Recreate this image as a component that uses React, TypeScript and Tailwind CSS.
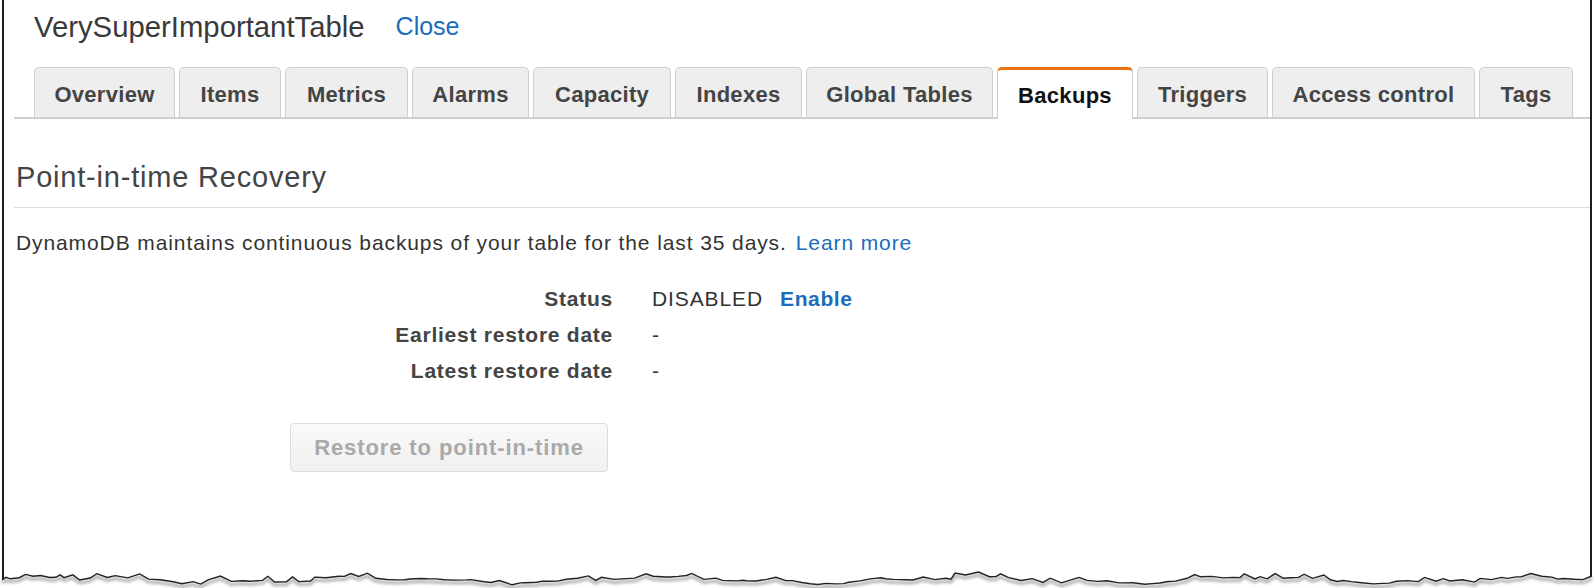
import React from 'react';

const tabs = [
  { label: 'Overview', w: 'w-[141px]' },
  { label: 'Items', w: 'w-[102px]' },
  { label: 'Metrics', w: 'w-[123px]' },
  { label: 'Alarms', w: 'w-[117px]' },
  { label: 'Capacity', w: 'w-[138px]' },
  { label: 'Indexes', w: 'w-[127px]' },
  { label: 'Global Tables', w: 'w-[187px]' },
  { label: 'Backups', w: 'w-[136px]', active: true },
  { label: 'Triggers', w: 'w-[131px]' },
  { label: 'Access control', w: 'w-[203px]' },
  { label: 'Tags', w: 'w-[94px]' },
];

// jagged "torn paper" edge at the bottom of the screenshot
const tear = (() => {
  let seed = 11;
  const rnd = () => {
    seed = (seed * 16807) % 2147483647;
    return seed / 2147483647;
  };
  const pts: [number, number][] = [[2, 14]];
  let x = 6;
  while (x < 1590) {
    const wave = Math.sin(x / 47) * 2.5 + Math.sin(x / 17) * 1.5;
    const spike = rnd() < 0.3 ? rnd() * 5 : 0;
    pts.push([x, 15 - wave - spike - rnd() * 2]);
    x += 4 + rnd() * 9;
  }
  pts.push([1592, 10]);
  return pts;
})();

const line = tear.map(([x, y], i) => `${i ? 'L' : 'M'}${x.toFixed(1)} ${y.toFixed(1)}`).join(' ');

const rows = [
  { label: 'Status', value: 'DISABLED', link: 'Enable' },
  { label: 'Earliest restore date', value: '-' },
  { label: 'Latest restore date', value: '-' },
];

export default function App() {
  return (
    <div className="relative w-[1596px] h-[588px] overflow-hidden bg-white font-['Liberation_Sans',Arial,sans-serif] text-[#333]">
      <div className="ml-[2px] w-[1590px] h-[588px] border-x-2 border-[#1c1c1c]">
        {/* header */}
        <div className="flex items-center gap-[31px] h-[53px] pl-[30px]">
          <span className="text-[29.3px] text-[#3a3a3a]">VerySuperImportantTable</span>
          <span className="text-[25px] text-[#1a6dbb]">Close</span>
        </div>

        {/* tabs */}
        <div className="mt-[14px] ml-[10px] flex items-end gap-[4px] pl-[20px] border-b-2 border-[#cfcfcf] h-[52px]">
          {tabs.map((t) =>
            t.active ? (
              <div
                key={t.label}
                className={`${t.w} h-[52px] -mb-[2px] flex items-center justify-center pt-[2px] bg-white border border-b-0 border-[#cfcfcf] border-t-[3px] border-t-[#ec7211] rounded-t-[5px] text-[22px] tracking-[0.3px] font-bold text-[#111]`}
              >
                {t.label}
              </div>
            ) : (
              <div
                key={t.label}
                className={`${t.w} h-[50px] flex items-center justify-center pt-[3px] bg-[#eeeeee] border border-b-0 border-[#cfcfcf] rounded-t-[5px] text-[22px] tracking-[0.3px] font-bold text-[#444]`}
              >
                {t.label}
              </div>
            )
          )}
        </div>

        {/* section header */}
        <div className="ml-[10px] pl-[2px] pt-[42px] pb-[14px] border-b border-[#dddddd]">
          <h2 className="text-[29px] leading-[32px] tracking-[0.8px] text-[#444]">Point-in-time Recovery</h2>
        </div>

        <p className="mt-[21px] pl-[12px] text-[21px] leading-[28px] tracking-[0.9px] text-[#333]">
          DynamoDB maintains continuous backups of your table for the last 35 days.
          <span className="ml-[9px] text-[#1a6dbb]">Learn more</span>
        </p>

        <div className="mt-[24px] grid grid-cols-[609px_auto] gap-x-[39px]">
          {rows.map((r) => (
            <React.Fragment key={r.label}>
              <div className="h-[36px] flex items-center justify-end text-[21px] tracking-[0.75px] font-bold text-[#444]">
                {r.label}
              </div>
              <div className="h-[36px] flex items-center gap-[17px] text-[21px] tracking-[0.9px] text-[#333]">
                <span>{r.value}</span>
                {r.link && <span className="font-bold tracking-[0.6px] text-[#1a6dbb]">{r.link}</span>}
              </div>
            </React.Fragment>
          ))}
        </div>

        <button
          disabled
          className="mt-[34px] ml-[286px] w-[318px] h-[49px] rounded-[4px] border border-[#dcdcdc] bg-gradient-to-b from-[#f9f9f9] to-[#f0f0f0] text-[22px] tracking-[0.9px] font-bold text-[#a9a9a9]"
        >
          Restore to point-in-time
        </button>
      </div>

      {/* torn edge */}
      <svg className="absolute left-0 top-[566px]" width="1596" height="22" viewBox="0 0 1596 22">
        <defs>
          <filter id="sh" x="-5%" y="-50%" width="110%" height="200%">
            <feGaussianBlur stdDeviation="1.6" />
          </filter>
        </defs>
        <path d={`${line} L1596 10 L1596 22 L0 22 L0 14 Z`} fill="#ffffff" />
        <path d={line} transform="translate(0 3)" fill="none" stroke="#555" strokeWidth="2.5" opacity="0.55" filter="url(#sh)" />
        <path d={line} fill="none" stroke="#222" strokeWidth="1.4" />
      </svg>
    </div>
  );
}
